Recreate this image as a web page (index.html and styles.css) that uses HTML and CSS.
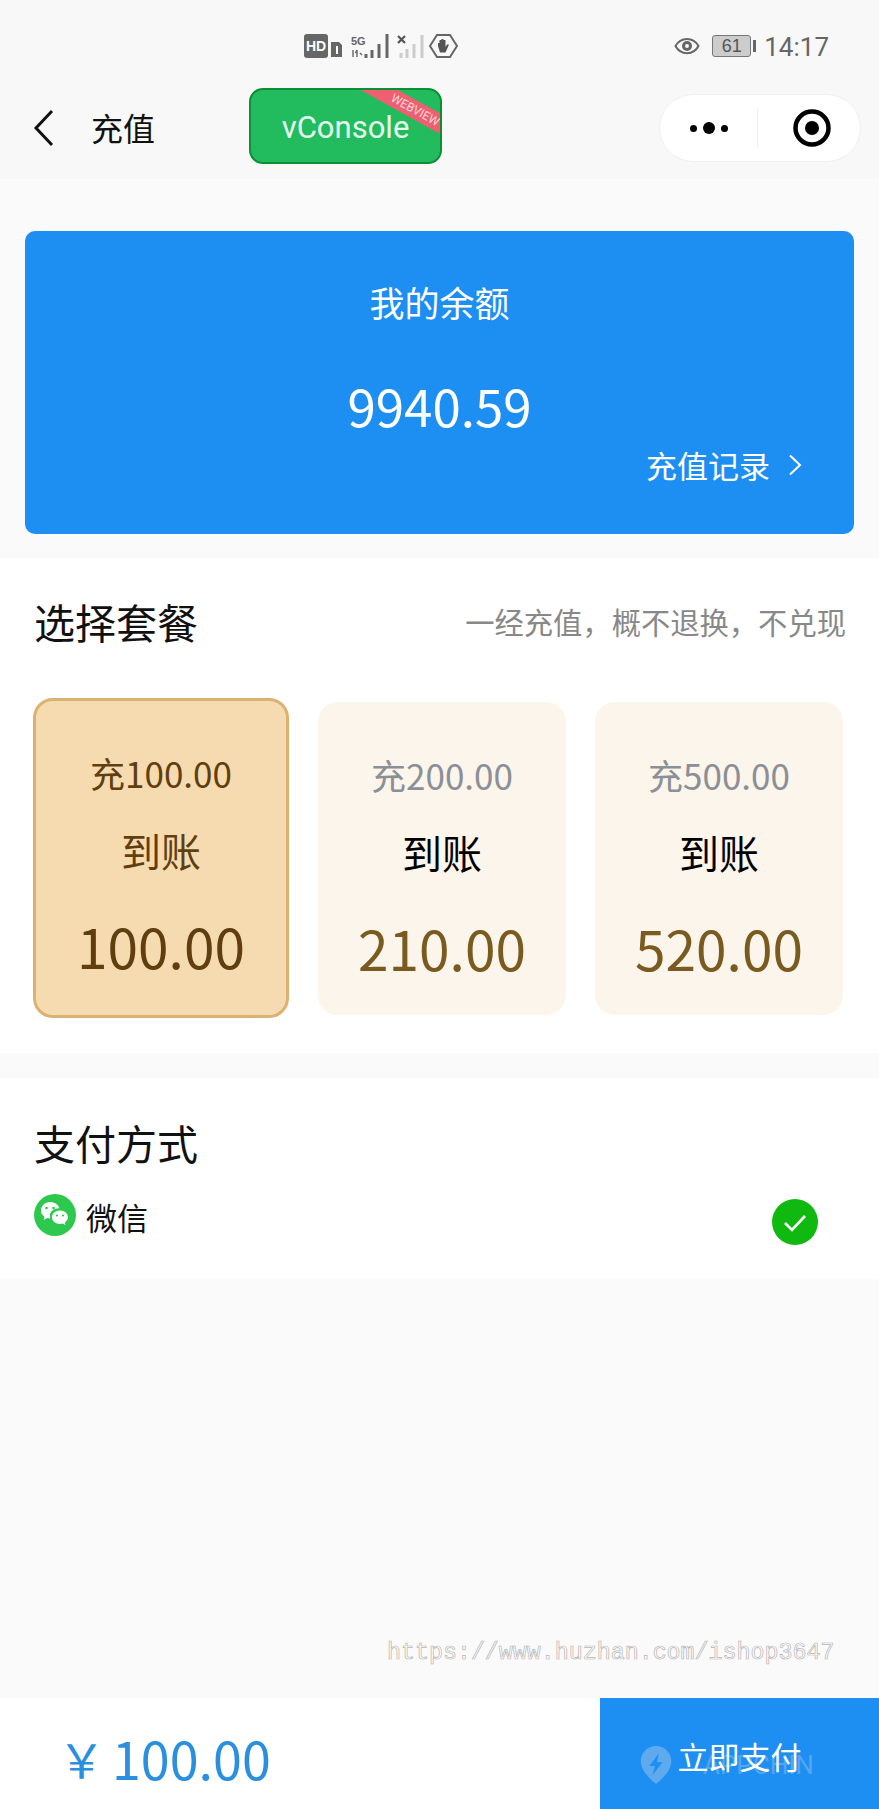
FILE: index.html
```html
<!DOCTYPE html>
<html lang="zh">
<head>
  <meta charset="UTF-8">
  <meta name="viewport" content="width=device-width, initial-scale=1.0">
  <title>充值</title>
  <link rel="stylesheet" href="styles.css">
</head>
<body>
  <header class="top">
    <div class="status-bar">
      <svg class="status-mid" width="154" height="26" viewBox="0 0 154 26">
        <!-- hd + sim -->
        <rect x="0" y="1" width="24" height="24" rx="3" fill="#666"/>
        <text x="12" y="18" class="st-hd">HD</text>
        <path d="M27 9h8l3 3v12h-11z" fill="#666"/>
        <path d="M33 13v8" stroke="#fff" stroke-width="2"/>
        <!-- 5g signal -->
        <text x="47" y="12" class="st-5g">5G</text>
        <path d="M49 17v7M53 17l-1.500 3M53 17v7M56 20l2 2" fill="none" stroke="#666" stroke-width="1.400"/>
        <path d="M62 25v-4M68 25v-8M75 25v-14M83 25v-24" stroke="#666" stroke-width="3"/>
        <!-- empty sim signal -->
        <path d="M94 3l7 7M101 3l-7 7" stroke="#555" stroke-width="2.200"/>
        <path d="M97 25v-5M103 25v-9M110 25v-14M118 25v-23" stroke="#ccc" stroke-width="3"/>
        <!-- hand -->
        <path d="M133 2h13l7 11l-7 11h-13l-7-11z" fill="none" stroke="#666" stroke-width="2"/>
        <path d="M134 13v-3h1.500v3v-6h2v6v-7h2v7v-6h2v7l1.500-2.500h2l-3.500 8h-5.500z" fill="#555"/>
      </svg>
      <div class="status-right">
        <svg width="26" height="18" viewBox="0 0 26 18">
          <path d="M1.500 9c5-9.500 18-9.500 23 0c-5 9.500-18 9.500-23 0z" fill="none" stroke="#666" stroke-width="2"/>
          <circle cx="13" cy="9" r="5" fill="#666"/>
          <circle cx="13" cy="9" r="2" fill="#f8f8f8"/>
        </svg>
        <span class="battery"><span class="battery-num">61</span></span>
        <span class="battery-tip"></span>
        <span class="clock">14:17</span>
      </div>
    </div>
    <nav class="nav-bar">
      <svg class="back" width="22" height="38" viewBox="0 0 22 38">
        <path d="M19 2L3 19l16 17" fill="none" stroke="#111" stroke-width="3"/>
      </svg>
      <span class="nav-title">充值</span>
      <div class="capsule">
        <div class="capsule-part">
          <i class="dot"></i><i class="dot dot-big"></i><i class="dot"></i>
        </div>
        <div class="capsule-line"></div>
        <div class="capsule-part capsule-ring">
          <svg width="38" height="38" viewBox="0 0 38 38">
            <circle cx="19" cy="19" r="16.500" fill="none" stroke="#000" stroke-width="4.500"/>
            <circle cx="19" cy="19" r="7" fill="#000"/>
          </svg>
        </div>
      </div>
      <div class="vconsole">vConsole<span class="ribbon">WEBVIEW</span></div>
    </nav>
  </header>

  <main class="content">
    <section class="balance">
      <div class="balance-label">我的余额</div>
      <div class="balance-num">9940.59</div>
      <div class="balance-link">
        充值记录
        <svg width="14" height="22" viewBox="0 0 14 22">
          <path d="M2 1.500L12 11L2 20.500" fill="none" stroke="#fff" stroke-width="2"/>
        </svg>
      </div>
    </section>

    <section class="panel packages">
      <div class="panel-head">
        <h2 class="panel-title">选择套餐</h2>
        <span class="panel-note">一经充值，概不退换，不兑现</span>
      </div>
      <div class="pack-list">
        <div class="pack pack-on">
          <div class="pack-pay">充100.00</div>
          <div class="pack-word">到账</div>
          <div class="pack-get">100.00</div>
        </div>
        <div class="pack">
          <div class="pack-pay">充200.00</div>
          <div class="pack-word">到账</div>
          <div class="pack-get">210.00</div>
        </div>
        <div class="pack">
          <div class="pack-pay">充500.00</div>
          <div class="pack-word">到账</div>
          <div class="pack-get">520.00</div>
        </div>
      </div>
    </section>

    <section class="panel payway">
      <h2 class="panel-title">支付方式</h2>
      <div class="pay-row">
        <svg class="wechat" width="42" height="42" viewBox="0 0 42 42">
          <circle cx="21" cy="21" r="21" fill="#2dc94e"/>
          <path d="M16 8c-5 0-9 4-9 8.500c0 2.700 1.300 4.700 3.500 6.200l-1 3.300l3.800-2c1 .3 2 .4 3 .4c-.3-.9-.4-1.700-.4-2.500c0-4.400 3.800-7.700 9-7.700h.5C24.400 10.600 20.600 8 16 8z" fill="#fff"/>
          <path d="M26 16.500c-4.600 0-8 3-8 6.800s3.400 6.700 8 6.700c1 0 1.800-.2 2.700-.5l2.800 1.600l-.7-2.700c1.900-1.300 3.200-3 3.200-5.100c0-3.800-3.400-6.800-8-6.800z" fill="#fff"/>
          <circle cx="12.500" cy="14" r="1.300" fill="#2dc94e"/>
          <circle cx="19.500" cy="14" r="1.300" fill="#2dc94e"/>
          <circle cx="23" cy="21.500" r="1.100" fill="#2dc94e"/>
          <circle cx="29" cy="21.500" r="1.100" fill="#2dc94e"/>
        </svg>
        <span class="pay-name">微信</span>
        <svg class="tick" width="46" height="46" viewBox="0 0 46 46">
          <circle cx="23" cy="23" r="23" fill="#0fb90f"/>
          <path d="M13 24l7 7l13-14" fill="none" stroke="#fff" stroke-width="2.600"/>
        </svg>
      </div>
    </section>
  </main>

  <div class="mark">https://www.huzhan.com/ishop3647</div>

  <footer class="bottom">
    <div class="total"><span class="total-sign">￥</span>100.00</div>
    <div class="pay-btn">
      <div class="btn-mark">
        <svg width="34" height="40" viewBox="0 0 34 42">
          <path d="M17 1c9 0 16 7 16 16c0 10-9 18-16 24C10 35 1 27 1 17C1 8 8 1 17 1z" fill="#5fa9ee"/>
          <path d="M20 9L10 22h6l-3 10l11-14h-6z" fill="#1e8ff2"/>
        </svg>
        <span>APPCHIN</span>
      </div>
      <span class="pay-text">立即支付</span>
    </div>
  </footer>
</body>
</html>
```

FILE: styles.css
```css
* {
  box-sizing: border-box;
}

html, body {
  margin: 0;
  padding: 0;
}

body {
  position: relative;
  width: 879px;
  height: 1809px;
  overflow: hidden;
  display: flex;
  flex-direction: column;
  background-color: #fafafa;
  color: #111;
  font-family: "Noto Sans CJK SC", "Noto Sans", sans-serif;
}

/* top bars */
.top {
  height: 178px;
  background-color: #f8f8f8;
}

.status-bar {
  height: 72px;
  display: flex;
  align-items: center;
  padding: 20px 50px 0 304px;
}

.st-hd {
  font-family: "Liberation Sans", sans-serif;
  font-size: 14px;
  font-weight: 700;
  fill: #fff;
  text-anchor: middle;
}

.st-5g {
  font-family: "Liberation Sans", sans-serif;
  font-size: 11px;
  font-weight: 700;
  fill: #666;
}

.status-right {
  margin-left: auto;
  display: flex;
  align-items: center;
  color: #666;
}

.battery {
  width: 39px;
  height: 22px;
  margin-left: 12px;
  border: 1px solid #777;
  border-radius: 3px;
  background-color: #ccc;
  display: flex;
  align-items: center;
  justify-content: center;
}

.battery-num {
  font-family: "Liberation Sans", sans-serif;
  font-size: 18px;
  line-height: 1;
  color: #555;
}

.battery-tip {
  width: 3px;
  height: 12px;
  margin-left: 2px;
  background-color: #666;
}

.clock {
  margin-left: 8px;
  font-family: "Roboto", sans-serif;
  font-size: 26px;
  line-height: 1;
  transform: translateY(1px);
}

.nav-bar {
  position: relative;
  height: 106px;
  display: flex;
  align-items: center;
  padding: 6px 18px 0 33px;
}

.nav-title {
  margin-left: 36px;
  margin-bottom: 2px;
  font-size: 32px;
  line-height: 1;
}

.capsule {
  margin-left: auto;
  width: 202px;
  height: 68px;
  display: flex;
  align-items: center;
  background-color: #fff;
  border: 1px solid #f0f0f0;
  border-radius: 34px;
}

.capsule-part {
  flex: 1;
  display: flex;
  align-items: center;
  justify-content: center;
  gap: 6px;
}

.capsule-ring {
  padding-left: 5px;
}

.capsule-line {
  width: 1px;
  height: 40px;
  background-color: #eee;
}

.dot {
  width: 7px;
  height: 7px;
  border-radius: 50%;
  background-color: #000;
}

.dot-big {
  width: 12px;
  height: 12px;
}

/* debug button floats over the nav bar */
.vconsole {
  position: absolute;
  left: 249px;
  top: 16px;
  width: 193px;
  height: 76px;
  overflow: hidden;
  display: flex;
  align-items: center;
  justify-content: center;
  padding: 2px 0 0;
  background-color: #22bb5e;
  border: 2px solid #0c8f32;
  border-radius: 14px;
  color: #e6fff0;
  font-family: "Roboto", sans-serif;
  font-size: 31px;
}

.ribbon {
  position: absolute;
  right: -35px;
  top: 8px;
  width: 130px;
  height: 18px;
  padding-left: 12px;
  display: flex;
  align-items: center;
  justify-content: center;
  background-color: #ee5f70;
  color: #ffd9de;
  font-size: 12px;
  transform: rotate(29deg);
}

/* page body */
.content {
  flex: 1;
  padding-top: 53px;
}

.balance {
  height: 303px;
  margin: 0 25px;
  padding: 48px 52px 0;
  background-color: #1e8ff2;
  border-radius: 10px;
  color: #fff;
  text-align: center;
}

.balance-label {
  font-size: 35px;
  line-height: 46px;
}

.balance-num {
  margin-top: 46px;
  font-size: 51px;
  line-height: 68px;
}

.balance-link {
  margin-top: 5px;
  display: flex;
  justify-content: flex-end;
  align-items: center;
  gap: 18px;
  font-size: 31px;
  line-height: 42px;
}

.panel {
  background-color: #fff;
}

.packages {
  height: 495px;
  margin-top: 24px;
  padding: 0 34px;
}

.panel-head {
  height: 126px;
  margin-bottom: 14px;
  display: flex;
  align-items: center;
  justify-content: space-between;
  margin-right: -1px;
}

.panel-title {
  margin: 0;
  font-size: 41px;
  font-weight: 400;
  line-height: 56px;
}

.panel-note {
  font-size: 29.300px;
  color: #888;
}

.pack-list {
  display: flex;
  align-items: center;
  justify-content: space-between;
  margin: 0 2px 0 -1px;
}

.pack {
  width: 248px;
  height: 313px;
  padding-top: 50px;
  background-color: #fcf5ec;
  border-radius: 20px;
  text-align: center;
  color: #7a5a1e;
}

.pack-on {
  width: 256px;
  height: 320px;
  padding-top: 49px;
  background-color: #f7dbb0;
  border: 3px solid #dab373;
  color: #5f3f10;
}

.pack-pay {
  font-size: 35px;
  line-height: 46px;
  color: #8b8f96;
}

.pack-word {
  margin-top: 27px;
  font-size: 40px;
  line-height: 54px;
  color: #000;
}

.pack-get {
  margin-top: 31px;
  font-size: 55px;
  line-height: 74px;
}

.pack-on .pack-pay,
.pack-on .pack-word {
  color: #5f3f10;
}

.payway {
  height: 201px;
  margin-top: 25px;
  padding: 36px 34px 0;
}

.pay-row {
  margin-top: 24px;
  display: flex;
  align-items: flex-start;
}

.pay-name {
  margin-left: 10px;
  margin-top: 2px;
  font-size: 31px;
  line-height: 42px;
}

.tick {
  margin-left: auto;
  margin-top: 5px;
  margin-right: 27px;
}

/* site watermark over the page */
.mark {
  position: absolute;
  left: 387px;
  top: 1637px;
  font-family: "Liberation Mono", monospace;
  font-size: 23.300px;
  line-height: 32px;
  color: #fff;
  -webkit-text-stroke: 0.7px #b5b5b5;
}

/* bottom bar */
.bottom {
  height: 111px;
  display: flex;
  background-color: #fff;
}

.total {
  flex: 1;
  display: flex;
  align-items: center;
  padding: 8px 0 0 58px;
  color: #2b8fe0;
  font-size: 52px;
}

.total-sign {
  margin-right: 7px;
  font-size: 47px;
}

.pay-btn {
  position: relative;
  width: 279px;
  display: flex;
  align-items: center;
  justify-content: center;
  padding-top: 4px;
  background-color: #1e8ff2;
  color: #fff;
  font-size: 31px;
}

.btn-mark {
  position: absolute;
  left: 39px;
  top: 47px;
  display: flex;
  align-items: center;
  gap: 30px;
  color: #55a5f0;
  font-family: "Roboto", sans-serif;
  font-size: 26px;
}

.pay-text {
  position: relative;
}
```
